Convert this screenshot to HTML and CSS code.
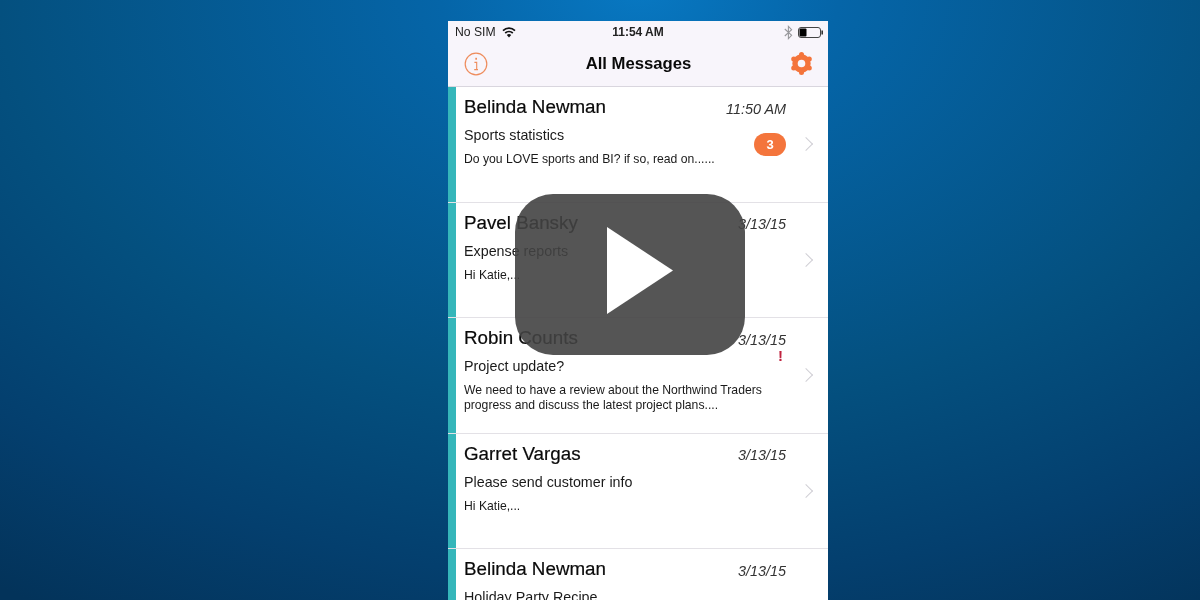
FILE: index.html
```html
<!DOCTYPE html>
<html>
<head>
	<meta charset="utf-8">
	<title>All Messages</title>
	<link rel="stylesheet" href="styles.css">
</head>
<body>
	<div class="stage">
		<div class="phone">
			<!-- status bar -->
			<div class="status">
				<div class="status-left">
					<span>No SIM</span>
					<svg class="wifi" width="14" height="11" viewBox="0 0 14 11">
						<path d="M1 3.6C4.5 .4 9.5 .4 13 3.6M3.2 6C5.4 4 8.6 4 10.8 6" fill="none" stroke="#111" stroke-width="1.7"/>
						<path d="M4.8 8C6.2 6.8 7.8 6.8 9.2 8L7 10.5Z" fill="#111"/>
					</svg>
				</div>
				<div class="status-time">11:54 AM</div>
				<div class="status-right">
					<svg width="9" height="15" viewBox="0 0 9 15">
						<path d="M.8 4L7.6 10.3L4.4 13.6V1.4L7.6 4.7L.8 11" fill="none" stroke="#98989c" stroke-width="1.1"/>
					</svg>
					<svg width="25" height="11" viewBox="0 0 25 11">
						<rect x=".5" y=".5" width="22" height="10" rx="2.5" fill="none" stroke="#444"/>
						<rect x="1.5" y="1.5" width="7" height="8" rx="1" fill="#000"/>
						<rect x="23.4" y="3.5" width="1.6" height="4" fill="#333"/>
					</svg>
				</div>
			</div>
			<!-- nav bar -->
			<div class="nav">
				<svg width="24" height="24" viewBox="0 0 24 24">
					<circle cx="12" cy="12" r="10.8" fill="none" stroke="#ee8c5c" stroke-width="1.2"/>
					<path d="M10.4 10.4H12.7V17.4M10.2 17.6H14" fill="none" stroke="#ee8c5c" stroke-width="1.1"/>
					<rect x="11.3" y="5.8" width="1.7" height="1.9" fill="#ee8c5c"/>
				</svg>
				<div class="nav-title">All Messages</div>
				<svg width="24" height="24" viewBox="-0.5 0.5 24 24">
					<g stroke="#f4743b" stroke-width="5" stroke-linecap="round">
						<path d="M12 3h.01"/>
						<path d="M12 21h.01"/>
						<path d="M4.2 7.5h.01"/>
						<path d="M19.8 7.5h.01"/>
						<path d="M4.2 16.5h.01"/>
						<path d="M19.8 16.5h.01"/>
					</g>
					<circle cx="12" cy="12" r="6.5" fill="none" stroke="#f4743b" stroke-width="5.4"/>
				</svg>
			</div>
			<!-- messages -->
			<div class="list">
				<div class="row">
					<div class="bar"></div>
					<div class="main">
						<div class="top"><span class="name">Belinda Newman</span><span class="date">11:50 AM</span></div>
						<div class="subject">Sports statistics</div>
						<div class="preview">Do you LOVE sports and BI? if so, read on......</div>
						<span class="badge">3</span>
					</div>
					<div class="chevron"></div>
				</div>
				<div class="row">
					<div class="bar"></div>
					<div class="main">
						<div class="top"><span class="name">Pavel Bansky</span><span class="date">3/13/15</span></div>
						<div class="subject">Expense reports</div>
						<div class="preview">Hi Katie,...</div>
					</div>
					<div class="chevron"></div>
				</div>
				<div class="row">
					<div class="bar"></div>
					<div class="main">
						<div class="top"><span class="name">Robin Counts</span><span class="date">3/13/15</span></div>
						<div class="subject">Project update?</div>
						<div class="preview">We need to have a review about the Northwind Traders<br>progress and discuss the latest project plans....</div>
						<span class="flag">!</span>
					</div>
					<div class="chevron"></div>
				</div>
				<div class="row">
					<div class="bar"></div>
					<div class="main">
						<div class="top"><span class="name">Garret Vargas</span><span class="date">3/13/15</span></div>
						<div class="subject">Please send customer info</div>
						<div class="preview">Hi Katie,...</div>
					</div>
					<div class="chevron"></div>
				</div>
				<div class="row">
					<div class="bar"></div>
					<div class="main">
						<div class="top"><span class="name">Belinda Newman</span><span class="date">3/13/15</span></div>
						<div class="subject">Holiday Party Recipe</div>
						<div class="preview">Hi Katie,...</div>
					</div>
					<div class="chevron"></div>
				</div>
			</div>
		</div>
		<!-- video play button -->
		<div class="play">
			<svg width="66" height="87" viewBox="0 0 66 87">
				<path d="M0 0L66 43.5L0 87Z" fill="#fff"/>
			</svg>
		</div>
	</div>
</body>
</html>
```

FILE: styles.css
```css
*{margin: 0px;padding: 0px;box-sizing: border-box;}
html,body{height: 100%;overflow: hidden;}
body{
	font-family: "Liberation Sans", Arial, sans-serif;
	color: #111;
}
.stage{
	position: relative;
	height: 600px;
	padding: 21px 0px 0px 448px;
	display: flex;
	overflow: hidden;
	background: radial-gradient(ellipse 1000px 650px at 640px -10px, #0878c2 0%, #0565a8 20%, #04507f 64%, #043f6e 91%, #03335a 112%);
}
.phone{
	width: 380px;
	height: 579px;
	background: #fff;
	overflow: hidden;
	filter: blur(0.3px);
}
.status{
	height: 21px;
	padding: 1px 5px 0px 7px;
	display: grid;
	grid-template-columns: 1fr auto 1fr;
	align-items: center;
	background: #f8f5fb;
	font-size: 12.2px;
	color: #222;
}
.status-left{
	display: flex;
	align-items: center;
	gap: 6px;
}
.status-time{
	font-weight: bold;
	font-size: 12px;
	margin-right: 2px;
}
.status-right{
	display: flex;
	align-items: center;
	justify-content: flex-end;
	gap: 5px;
}
.nav{
	height: 45px;
	padding: 0px 15px 1px 16px;
	display: flex;
	align-items: center;
	justify-content: space-between;
	background: #f8f5fb;
	border-bottom: 1px solid #d9d6de;
}
.nav-title{
	font-size: 16.7px;
	font-weight: bold;
	color: #0a0a0a;
}
.row{
	height: 115.6px;
	display: flex;
	background: #fff;
	border-bottom: 1px solid #e3e1e6;
}
.bar{
	width: 8px;
	background: #35b6ba;
}
.main{
	flex: 1;
	position: relative;
	padding: 8px 0px 0px 8px;
}
.top{
	display: flex;
	justify-content: space-between;
	align-items: center;
	height: 24px;
}
.name{
	font-size: 18.8px;
	color: #0a0a0a;
	-webkit-text-stroke: 0.2px #0a0a0a;
}
.date{
	font-size: 14.4px;
	font-style: italic;
	color: #333;
	margin-top: 3px;
}
.subject{
	font-size: 14.3px;
	margin-top: 6px;
	line-height: 20px;
	color: #1a1a1a;
}
.preview{
	font-size: 12.2px;
	line-height: 15px;
	margin-top: 7px;
	color: #1a1a1a;
}
.badge{
	position: absolute;
	right: 0px;
	top: 46px;
	width: 32px;
	height: 23px;
	line-height: 23px;
	border-radius: 12px;
	background: #f4753c;
	color: #fff;
	font-size: 13px;
	font-weight: bold;
	text-align: center;
}
.flag{
	position: absolute;
	right: 3px;
	top: 29px;
	font-size: 15px;
	font-weight: bold;
	color: #c0233f;
}
.chevron{
	width: 42px;
	display: flex;
	align-items: center;
	justify-content: center;
}
.chevron::after{
	content: "";
	width: 9px;
	height: 9px;
	margin-left: -3px;
	border-top: 1.5px solid #d0cfd5;
	border-right: 1.5px solid #d0cfd5;
	transform: rotate(45deg);
}
.play{
	position: absolute;
	left: 515px;
	top: 194px;
	width: 230px;
	height: 161px;
	border-radius: 38px;
	background: rgba(66,66,66,0.9);
	display: flex;
	align-items: center;
	justify-content: center;
	padding: 0px 0px 9px 19px;
}
```
